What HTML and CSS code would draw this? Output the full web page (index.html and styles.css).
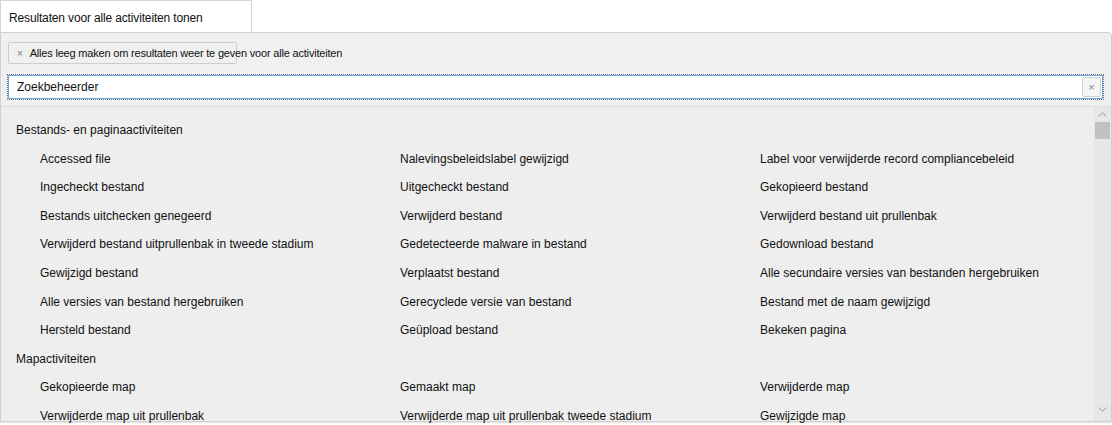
FILE: index.html
```html
<!DOCTYPE html>
<html lang="nl">
<head>
<meta charset="utf-8">
<title>Activiteiten</title>
<link rel="stylesheet" href="styles.css">
</head>
<body>
<div class="tab">Resultaten voor alle activiteiten tonen</div>
<div class="panel">
  <div class="panel-head">
    <div class="chip"><span class="chip-x">×</span><span class="chip-text">Alles leeg maken om resultaten weer te geven voor alle activiteiten</span></div>
    <div class="search">
      <span class="search-text">Zoekbeheerder</span>
      <span class="clear">×</span>
    </div>
  </div>
  <div class="list">
    <div class="content">
      <div class="group">Bestands- en paginaactiviteiten</div>
      <div class="items">
        <div class="item">Accessed file</div>
        <div class="item">Nalevingsbeleidslabel gewijzigd</div>
        <div class="item">Label voor verwijderde record compliancebeleid</div>
        <div class="item">Ingecheckt bestand</div>
        <div class="item">Uitgecheckt bestand</div>
        <div class="item">Gekopieerd bestand</div>
        <div class="item">Bestands uitchecken genegeerd</div>
        <div class="item">Verwijderd bestand</div>
        <div class="item">Verwijderd bestand uit prullenbak</div>
        <div class="item">Verwijderd bestand uitprullenbak in tweede stadium</div>
        <div class="item">Gedetecteerde malware in bestand</div>
        <div class="item">Gedownload bestand</div>
        <div class="item">Gewijzigd bestand</div>
        <div class="item">Verplaatst bestand</div>
        <div class="item">Alle secundaire versies van bestanden hergebruiken</div>
        <div class="item">Alle versies van bestand hergebruiken</div>
        <div class="item">Gerecyclede versie van bestand</div>
        <div class="item">Bestand met de naam gewijzigd</div>
        <div class="item">Hersteld bestand</div>
        <div class="item">Geüpload bestand</div>
        <div class="item">Bekeken pagina</div>
      </div>
      <div class="group">Mapactiviteiten</div>
      <div class="items">
        <div class="item">Gekopieerde map</div>
        <div class="item">Gemaakt map</div>
        <div class="item">Verwijderde map</div>
        <div class="item"><span class="cut">Verwijderde map uit prullenbak</span></div>
        <div class="item"><span class="cut">Verwijderde map uit prullenbak tweede stadium</span></div>
        <div class="item">Gewijzigde map</div>
      </div>
    </div>
    <div class="scrollbar">
      <div class="arrow">
        <svg width="9" height="5" viewBox="0 0 9 5"><path d="M0.5 4.5 L4.5 0.8 L8.5 4.5" fill="none" stroke="#9a9a9a" stroke-width="1"/></svg>
      </div>
      <div class="thumb"></div>
      <div class="track"></div>
      <div class="arrow down">
        <svg width="9" height="5" viewBox="0 0 9 5"><path d="M0.5 0.5 L4.5 4.2 L8.5 0.5" fill="none" stroke="#9a9a9a" stroke-width="1"/></svg>
      </div>
    </div>
  </div>
</div>
</body>
</html>
```

FILE: styles.css
```css
html, body {
  margin: 0;
  padding: 0;
  background: #ffffff;
  overflow: hidden;
  height: 425px;
}

body {
  font-family: "Liberation Sans", Arial, sans-serif;
  font-size: 12px;
  color: #111111;
}

.tab {
  box-sizing: border-box;
  width: 252px;
  height: 32px;
  border: 1px solid #d4d4d4;
  border-bottom: none;
  padding: 10px 0 0 8px;
  font-size: 12px;
  letter-spacing: -0.15px;
  background: #ffffff;
}

.panel {
  box-sizing: border-box;
  width: 1112px;
  height: 390px;
  border: 1px solid #cfcfcf;
  border-top-right-radius: 4px;
  background: #eeeeee;
  box-shadow: 0 1px 2px rgba(0, 0, 0, 0.12);
  display: flex;
  flex-direction: column;
}

.panel-head {
  background: #f0f0f0;
  padding: 9px 7px 7px 7px;
  display: flex;
  flex-direction: column;
  gap: 11px;
  border-top-right-radius: 4px;
}

.chip {
  box-sizing: border-box;
  width: 229px;
  height: 22px;
  border: 1px solid #cdcdcd;
  border-radius: 2px;
  background: #f0f0f0;
  display: flex;
  align-items: center;
  white-space: nowrap;
  font-size: 11px;
  letter-spacing: -0.19px;
}

.chip-x {
  color: #7a7a7a;
  font-size: 10px;
  margin: 0 7px 0 8px;
}

.search {
  box-sizing: border-box;
  height: 24px;
  width: 1095px;
  background: #ffffff;
  border: 1px solid #6aa7e6;
  outline: 1px dotted #777777;
  display: flex;
  align-items: center;
  justify-content: space-between;
  padding: 0 1px 0 8px;
}

.search-text {
  font-size: 12px;
}

.clear {
  box-sizing: border-box;
  width: 19px;
  height: 20px;
  border: 1px solid #d0d0d0;
  border-radius: 2px;
  background: #f5f5f5;
  color: #8a8a8a;
  font-size: 11px;
  display: flex;
  align-items: center;
  justify-content: center;
}

.list {
  flex: 1;
  border-top: 1px solid #dcdcdc;
  display: flex;
  min-height: 0;
}

.content {
  flex: 1;
  padding: 9px 0 0 15px;
}

.group {
  height: 28.6px;
  line-height: 28.6px;
  white-space: nowrap;
}

.items {
  display: grid;
  grid-template-columns: 360px 360px 1fr;
  margin-left: 24px;
}

.item {
  height: 28.6px;
  line-height: 28.6px;
  white-space: nowrap;
}

.cut {
  background: linear-gradient(to bottom, transparent 0 17px, #ffffff 17px);
  padding: 0 2px 3px 0;
}

.scrollbar {
  width: 17px;
  background: #e7e7e7;
  display: flex;
  flex-direction: column;
  align-items: center;
}

.arrow {
  height: 15px;
  display: flex;
  align-items: center;
  justify-content: center;
}

.thumb {
  width: 15px;
  height: 17px;
  background: #c1c1c1;
}

.track {
  flex: 1;
}

.arrow.down {
  height: 17px;
  align-items: flex-start;
  padding-top: 3px;
  box-sizing: border-box;
}
```
